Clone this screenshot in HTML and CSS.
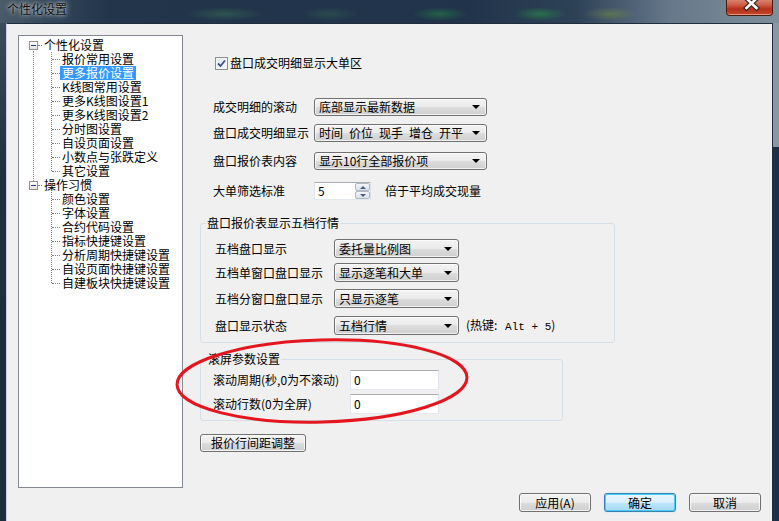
FILE: index.html
```html
<!DOCTYPE html>
<html lang="zh-CN">
<head>
    <meta charset="UTF-8">
    <title>个性化设置</title>
    <link rel="stylesheet" href="styles.css">
</head>
<body>
    <div class="window">
        <div class="titlebar">
            <span class="title">个性化设置</span>
            <div class="close-btn">
                <svg width="47" height="16" viewBox="0 0 47 16">
                    <path d="M20.5 -1.5 L30.5 8 M30.5 -1.5 L20.5 8" stroke="#3b2320" stroke-width="5" stroke-linecap="square"/>
                    <path d="M20.5 -1.5 L30.5 8 M30.5 -1.5 L20.5 8" stroke="#fff" stroke-width="2.6" stroke-linecap="square"/>
                </svg>
            </div>
        </div>

        <div class="frame">
            <div class="frame-left"></div>

            <div class="client">
                <div class="client-top">
                    <!-- left navigation tree -->
                    <div class="tree">
                        <ul class="tree-list">
                            <li class="tree-node">
                                <div class="tree-item"><span class="toggle"></span><span class="stem"></span><span class="tree-label">个性化设置</span></div>
                                <ul class="tree-sub">
                                    <li><div class="tree-item"><span class="stem"></span><span class="tree-label">报价常用设置</span></div></li>
                                    <li><div class="tree-item"><span class="stem"></span><span class="tree-label selected">更多报价设置</span></div></li>
                                    <li><div class="tree-item"><span class="stem"></span><span class="tree-label">K线图常用设置</span></div></li>
                                    <li><div class="tree-item"><span class="stem"></span><span class="tree-label">更多K线图设置1</span></div></li>
                                    <li><div class="tree-item"><span class="stem"></span><span class="tree-label">更多K线图设置2</span></div></li>
                                    <li><div class="tree-item"><span class="stem"></span><span class="tree-label">分时图设置</span></div></li>
                                    <li><div class="tree-item"><span class="stem"></span><span class="tree-label">自设页面设置</span></div></li>
                                    <li><div class="tree-item"><span class="stem"></span><span class="tree-label">小数点与张跌定义</span></div></li>
                                    <li><div class="tree-item"><span class="stem"></span><span class="tree-label">其它设置</span></div></li>
                                </ul>
                            </li>
                            <li class="tree-node">
                                <div class="tree-item"><span class="toggle"></span><span class="stem"></span><span class="tree-label">操作习惯</span></div>
                                <ul class="tree-sub">
                                    <li><div class="tree-item"><span class="stem"></span><span class="tree-label">颜色设置</span></div></li>
                                    <li><div class="tree-item"><span class="stem"></span><span class="tree-label">字体设置</span></div></li>
                                    <li><div class="tree-item"><span class="stem"></span><span class="tree-label">合约代码设置</span></div></li>
                                    <li><div class="tree-item"><span class="stem"></span><span class="tree-label">指标快捷键设置</span></div></li>
                                    <li><div class="tree-item"><span class="stem"></span><span class="tree-label">分析周期快捷键设置</span></div></li>
                                    <li><div class="tree-item"><span class="stem"></span><span class="tree-label">自设页面快捷键设置</span></div></li>
                                    <li><div class="tree-item"><span class="stem"></span><span class="tree-label">自建板块快捷键设置</span></div></li>
                                </ul>
                            </li>
                        </ul>
                    </div>

                    <!-- settings page -->
                    <div class="settings">
                        <div class="check-row">
                            <span class="checkbox">
                                <svg width="9" height="9" viewBox="0 0 9 9"><path d="M1 4.5 L3.5 7 L8 1.5" fill="none" stroke="#3c4f8c" stroke-width="1.8"/></svg>
                            </span>
                            <span class="check-label">盘口成交明细显示大单区</span>
                        </div>

                        <div class="form-row row-1">
                            <span class="form-label">成交明细的滚动</span>
                            <div class="combo wide"><span>底部显示最新数据</span><i class="arrow"></i></div>
                        </div>
                        <div class="form-row row-2">
                            <span class="form-label">盘口成交明细显示</span>
                            <div class="combo wide"><span>时间&ensp;价位&ensp;现手&ensp;增仓&ensp;开平</span><i class="arrow"></i></div>
                        </div>
                        <div class="form-row row-3">
                            <span class="form-label">盘口报价表内容</span>
                            <div class="combo wide"><span>显示10行全部报价项</span><i class="arrow"></i></div>
                        </div>
                        <div class="form-row row-4">
                            <span class="form-label">大单筛选标准</span>
                            <div class="spin">
                                <span class="spin-text">5</span>
                                <div class="spin-btns">
                                    <span class="spin-btn"><i class="tri-up"></i></span>
                                    <span class="spin-btn"><i class="tri-down"></i></span>
                                </div>
                            </div>
                            <span class="spin-note">倍于平均成交现量</span>
                        </div>

                        <fieldset class="group group-level">
                            <legend>盘口报价表显示五档行情</legend>
                            <div class="group-rows">
                                <div class="group-row">
                                    <span class="group-label">五档盘口显示</span>
                                    <div class="combo narrow"><span>委托量比例图</span><i class="arrow"></i></div>
                                </div>
                                <div class="group-row">
                                    <span class="group-label">五档单窗口盘口显示</span>
                                    <div class="combo narrow"><span>显示逐笔和大单</span><i class="arrow"></i></div>
                                </div>
                                <div class="group-row">
                                    <span class="group-label">五档分窗口盘口显示</span>
                                    <div class="combo narrow"><span>只显示逐笔</span><i class="arrow"></i></div>
                                </div>
                                <div class="group-row">
                                    <span class="group-label">盘口显示状态</span>
                                    <div class="combo narrow"><span>五档行情</span><i class="arrow"></i></div>
                                    <span class="hotkey">(热键: <span class="mono">Alt + 5</span>)</span>
                                </div>
                            </div>
                        </fieldset>

                        <fieldset class="group group-scroll">
                            <legend>滚屏参数设置</legend>
                            <div class="scroll-rows">
                                <div class="scroll-row">
                                    <span class="scroll-label">滚动周期(秒,0为不滚动)</span>
                                    <span class="text-input">0</span>
                                </div>
                                <div class="scroll-row">
                                    <span class="scroll-label">滚动行数(0为全屏)</span>
                                    <span class="text-input">0</span>
                                </div>
                            </div>
                        </fieldset>

                        <div class="btn spacing-btn">报价行间距调整</div>
                    </div>
                </div>

                <div class="dialog-buttons">
                    <div class="btn">应用(A)</div>
                    <div class="btn default">确定</div>
                    <div class="btn">取消</div>
                </div>
            </div>

            <div class="frame-right"></div>
        </div>

        <!-- red annotation circle drawn over the scroll group -->
        <svg class="mark" width="304" height="96" viewBox="0 0 304 96">
            <ellipse cx="148" cy="46" rx="145" ry="41" fill="none" stroke="#e3161f" stroke-width="3" transform="rotate(-1.5 148 46)"/>
        </svg>
    </div>
</body>
</html>
```

FILE: styles.css
```css
* {
    box-sizing: border-box;
}

body {
    margin: 0;
    width: 779px;
    height: 521px;
    overflow: hidden;
    background-color: #1c2d42;
}

.window {
    position: relative;
    width: 779px;
    height: 521px;
    display: flex;
    flex-direction: column;
    font-family: "Noto Sans CJK SC", "Liberation Sans", sans-serif;
    font-size: 12px;
    line-height: 14px;
    color: #000;
}

/* glass title bar with a blurred window behind it */
.titlebar {
    flex: none;
    height: 23px;
    display: flex;
    justify-content: space-between;
    align-items: flex-start;
    background:
        radial-gradient(ellipse 40px 7px at 225px 14px, rgba(70, 140, 90, 0.35), transparent),
        radial-gradient(ellipse 30px 7px at 330px 14px, rgba(70, 140, 90, 0.25), transparent),
        radial-gradient(ellipse 28px 7px at 440px 14px, rgba(40, 150, 70, 0.45), transparent),
        radial-gradient(ellipse 26px 7px at 540px 14px, rgba(40, 160, 70, 0.5), transparent),
        radial-gradient(ellipse 26px 7px at 610px 14px, rgba(120, 150, 60, 0.45), transparent),
        linear-gradient(to right, #4a5b6a 0, #34475b 6%, #22354b 14%, #20334a 60%, #2e4257 74%, #66788a 86%, #7f8f9a 100%);
}

.title {
    margin: 2px 0 0 7px;
    color: #111;
    text-shadow: 0 0 6px rgba(255, 255, 255, 0.8), 0 0 3px rgba(255, 255, 255, 0.6);
}

.close-btn {
    width: 47px;
    height: 16px;
    margin-right: 6px;
    border: 1px solid #4a1c14;
    border-top: none;
    border-radius: 0 0 4px 4px;
    background: linear-gradient(#d9826e 0, #cc5a44 35%, #b6301a 60%, #c2482e 100%);
    box-shadow: inset 0 -1px 0 rgba(255, 200, 180, 0.6);
    overflow: hidden;
}

.close-btn svg {
    display: block;
    margin-left: -1px;
}

.frame {
    flex: 1;
    display: flex;
}

.frame-left {
    width: 6px;
    background: linear-gradient(#3a4d5e 0, #1d3044 30%, #1b2e40 100%);
}

.frame-right {
    width: 6px;
    background: linear-gradient(#8a98a3 0, #8a98a3 124px, #1b2f47 124px, #1b2f47 100%);
}

.client {
    width: 767px;
    padding: 11px 11px 0 11px;
    background-color: #f0f0f0;
    border-top: 1px solid #1f2d3c;
    border-right: 1px solid #1f2d3c;
    border-left: 1px solid #c9d1d9;
    display: flex;
    flex-direction: column;
}

.client-top {
    display: flex;
    height: 453px;
}

/* tree view */
.tree {
    width: 165px;
    border: 1px solid #828790;
    background-color: #fff;
    padding-top: 2px;
}

.tree-list,
.tree-sub {
    list-style: none;
    margin: 0;
    padding: 0;
}

.tree-item {
    height: 14px;
    display: flex;
    align-items: center;
    white-space: nowrap;
}

.tree-node > .tree-item {
    padding-left: 10px;
}

.tree-node:first-child > .tree-item {
    background: repeating-linear-gradient(#808080 0 1px, transparent 1px 2px) 14px 100% / 1px 3px no-repeat;
}

.tree-node + .tree-node > .tree-item {
    background: repeating-linear-gradient(#808080 0 1px, transparent 1px 2px) 14px 0 / 1px 3px no-repeat;
}

.tree-node:first-child > .tree-sub {
    background: repeating-linear-gradient(#808080 0 1px, transparent 1px 2px) 14px 0 / 1px 100% no-repeat;
}

.toggle {
    width: 9px;
    height: 9px;
    border: 1px solid #919191;
    background: linear-gradient(#fff, #e2e2e2);
    display: flex;
    align-items: center;
    justify-content: center;
}

.toggle::before {
    content: "";
    width: 5px;
    height: 1px;
    background-color: #1e3f7a;
}

.tree-node > .tree-item .stem {
    width: 4px;
    border-top: 1px dotted #808080;
}

.tree-sub > li {
    background: repeating-linear-gradient(#808080 0 1px, transparent 1px 2px) 32px 0 / 1px 100% no-repeat;
}

.tree-sub > li:last-child {
    background-size: 1px 8px;
}

.tree-sub .tree-item {
    padding-left: 33px;
}

.tree-sub .stem {
    width: 8px;
    border-top: 1px dotted #808080;
}

.tree-label {
    padding: 0 2px;
    height: 14px;
}

.tree-label.selected {
    background-color: #3399ff;
    color: #fff;
}

/* right settings page */
.settings {
    margin-left: 17px;
    flex: 1;
}

.check-row {
    margin-top: 21px;
    padding-left: 15px;
    height: 14px;
    display: flex;
    align-items: center;
}

.checkbox {
    width: 13px;
    height: 13px;
    border: 1px solid #8e8f8f;
    background: linear-gradient(135deg, #dfe6f2, #f6f8fc);
    box-shadow: inset 0 0 0 1px #f4f4f4;
    display: flex;
    align-items: center;
    justify-content: center;
}

.checkbox svg {
    display: block;
}

.check-label {
    margin-left: 2px;
}

.form-row {
    display: flex;
    align-items: center;
    height: 18px;
    padding-left: 13px;
}

.row-1 { margin-top: 28px; }
.row-2 { margin-top: 8px; }
.row-3 { margin-top: 10px; }
.row-4 { margin-top: 12px; }

.form-label {
    width: 101px;
    white-space: nowrap;
}

.combo {
    position: relative;
    height: 18px;
    display: flex;
    align-items: center;
    justify-content: space-between;
    padding: 0 6px 0 4px;
    border: 1px solid #707070;
    border-radius: 3px;
    background: linear-gradient(#f3f3f3 0, #ebebeb 50%, #dddddd 50%, #cfcfcf 100%);
    box-shadow: inset 0 0 0 1px rgba(255, 255, 255, 0.7);
    white-space: nowrap;
}

.combo.wide {
    width: 173px;
}

.combo.narrow {
    width: 125px;
    height: 19px;
}

.arrow {
    width: 0;
    height: 0;
    border-left: 4px solid transparent;
    border-right: 4px solid transparent;
    border-top: 4px solid #000;
}

.spin {
    width: 57px;
    height: 18px;
    display: flex;
    border: 1px solid #abadb3;
    border-bottom-color: #e3e9ef;
    border-right-color: #dbdfe6;
    border-left-color: #e2e3ea;
    background-color: #fff;
}

.spin-text {
    flex: 1;
    padding-left: 3px;
    line-height: 16px;
}

.spin-btns {
    width: 15px;
    display: flex;
    flex-direction: column;
}

.spin-btn {
    flex: 1;
    display: flex;
    align-items: center;
    justify-content: center;
    border: 1px solid #b0b8c4;
    border-radius: 2px;
    background: linear-gradient(#f4f6f9, #dce2ea);
}

.tri-up,
.tri-down {
    width: 0;
    height: 0;
    border-left: 3px solid transparent;
    border-right: 3px solid transparent;
}

.tri-up {
    border-bottom: 3px solid #4a5d86;
}

.tri-down {
    border-top: 3px solid #4a5d86;
}

.spin-note {
    margin-left: 14px;
}

/* group boxes */
.group {
    margin: 0;
    padding: 0;
    border: 1px solid #d5dfe5;
    border-radius: 3px;
    min-width: 0;
}

.group legend {
    padding: 0 1px;
    line-height: 14px;
}

.group-level {
    width: 415px;
    margin-top: 16px;
}

.group-level legend {
    margin-left: 5px;
}

.group-rows {
    padding: 9px 0 7px 14px;
}

.group-row {
    display: flex;
    align-items: center;
    height: 19px;
}

.group-row + .group-row { margin-top: 5px; }
.group-row:nth-child(3) { margin-top: 7px; }
.group-row:nth-child(4) { margin-top: 8px; }

.group-label {
    width: 119px;
    white-space: nowrap;
}

.hotkey {
    margin-left: 7px;
    white-space: nowrap;
}

.mono {
    font-family: "Liberation Mono", monospace;
    font-size: 11px;
    margin-left: 5px;
}

.group-scroll {
    width: 363px;
    margin-top: 9px;
}

.group-scroll legend {
    margin-left: 6px;
}

.scroll-rows {
    padding: 4px 0 6px 12px;
}

.scroll-row {
    display: flex;
    align-items: center;
    height: 20px;
}

.scroll-row + .scroll-row {
    margin-top: 4px;
}

.scroll-label {
    width: 137px;
    white-space: nowrap;
}

.text-input {
    width: 89px;
    height: 20px;
    padding-left: 3px;
    line-height: 18px;
    background-color: #fff;
    border: 1px solid #e2e3ea;
    border-top-color: #abadb3;
    border-bottom-color: #e3e9ef;
}

/* push buttons */
.btn {
    height: 19px;
    display: flex;
    align-items: center;
    justify-content: center;
    border: 1px solid #707070;
    border-radius: 3px;
    background: linear-gradient(#f3f3f3 0, #ebebeb 50%, #dddddd 50%, #cfcfcf 100%);
    box-shadow: inset 0 0 0 1px rgba(255, 255, 255, 0.75);
    white-space: nowrap;
}

.spacing-btn {
    width: 106px;
    height: 18px;
    margin-top: 13px;
}

.dialog-buttons {
    margin-top: 5px;
    display: flex;
    justify-content: flex-end;
    gap: 13px;
}

.dialog-buttons .btn {
    width: 72px;
}

.btn.default {
    border-color: #3c7fb1;
    background: linear-gradient(#eaf6fd 0, #d9f0fc 50%, #bee6fd 50%, #a7d9f5 100%);
    box-shadow: inset 0 0 0 1px #48cdf8, 0 0 1px #48cdf8;
}

/* red annotation mark */
.mark {
    position: absolute;
    left: 174px;
    top: 335px;
}
```
